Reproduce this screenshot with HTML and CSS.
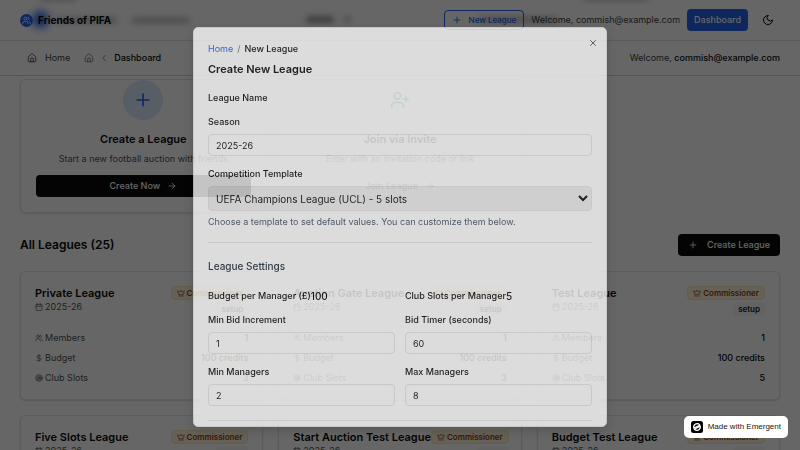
FILE: index.html
```html
<!DOCTYPE html>
<html lang="en">
<head>
<meta charset="utf-8">
<meta name="viewport" content="width=device-width, initial-scale=1">
<title>Friends of PIFA</title>
<link rel="stylesheet" href="styles.css">
</head>
<body>
<svg class="sprite" aria-hidden="true">
  <symbol id="i-users" viewBox="0 0 24 24"><path d="M16 21v-2a4 4 0 0 0-4-4H6a4 4 0 0 0-4 4v2"/><circle cx="9" cy="7" r="4"/><path d="M22 21v-2a4 4 0 0 0-3-3.9M16 3.1a4 4 0 0 1 0 7.8"/></symbol>
  <symbol id="i-home" viewBox="0 0 24 24"><path d="M15 21v-8a1 1 0 0 0-1-1h-4a1 1 0 0 0-1 1v8"/><path d="M3 10a2 2 0 0 1 .7-1.500l7-6a2 2 0 0 1 2.600 0l7 6A2 2 0 0 1 21 10v9a2 2 0 0 1-2 2H5a2 2 0 0 1-2-2z"/></symbol>
  <symbol id="i-left" viewBox="0 0 24 24"><path d="m15 18-6-6 6-6"/></symbol>
  <symbol id="i-plus" viewBox="0 0 24 24"><path d="M5 12h14M12 5v14"/></symbol>
  <symbol id="i-x" viewBox="0 0 24 24"><path d="M18 6 6 18M6 6l12 12"/></symbol>
  <symbol id="i-arrow" viewBox="0 0 24 24"><path d="M5 12h14M12 5l7 7-7 7"/></symbol>
  <symbol id="i-moon" viewBox="0 0 24 24"><path d="M12 3a6 6 0 0 0 9 9 9 9 0 1 1-9-9Z"/></symbol>
  <symbol id="i-userplus" viewBox="0 0 24 24"><path d="M16 21v-2a4 4 0 0 0-4-4H6a4 4 0 0 0-4 4v2"/><circle cx="9" cy="7" r="4"/><path d="M19 8v6M22 11h-6"/></symbol>
  <symbol id="i-calendar" viewBox="0 0 24 24"><path d="M8 2v4M16 2v4M3 10h18"/><rect x="3" y="4" width="18" height="18" rx="2"/></symbol>
  <symbol id="i-dollar" viewBox="0 0 24 24"><path d="M12 2v20M17 5H9.500a3.500 3.500 0 0 0 0 7h5a3.500 3.500 0 0 1 0 7H6"/></symbol>
  <symbol id="i-target" viewBox="0 0 24 24"><circle cx="12" cy="12" r="10"/><circle cx="12" cy="12" r="6"/><circle cx="12" cy="12" r="2"/></symbol>
  <symbol id="i-crown" viewBox="0 0 24 24"><path d="M11.600 3.300a.5.5 0 0 1 .9 0L15.400 8.900a1 1 0 0 0 1.500.3L21.200 5.500a.5.5 0 0 1 .8.500l-2.800 10.200a1 1 0 0 1-1 .7H5.800a1 1 0 0 1-1-.7L2 6a.5.5 0 0 1 .8-.5l4.300 3.700a1 1 0 0 0 1.500-.3zM5 21h14"/></symbol>
</svg>

<div class="page">
  <header class="topbar">
    <div class="ghosts" aria-hidden="true">
      <i class="ghost-logo"></i><i class="ghost-bar ghost-name"></i><i class="ghost-bar ghost-back"></i><i class="ghost-bar ghost-product"></i><i class="ghost-bar ghost-chevron"></i><i class="ghost-bar ghost-new"></i><i class="ghost-bar ghost-left"></i><i class="ghost-bar ghost-top"></i>
    </div>
    <a class="brand" href="#"><span class="logo"><svg class="icon"><use href="#i-users"/></svg></span>Friends of PIFA</a>
    <div class="actions">
      <button class="btn outline"><svg class="icon"><use href="#i-plus"/></svg>New League</button>
      <span class="welcome">Welcome, commish@example.com</span>
      <button class="btn primary">Dashboard</button>
      <button class="theme" aria-label="Toggle theme"><svg class="icon"><use href="#i-moon"/></svg></button>
    </div>
  </header>
  <nav class="subnav" aria-label="Breadcrumb">
    <div class="crumbs">
      <a href="#"><svg class="icon"><use href="#i-home"/></svg>Home</a>
      <span class="trail"><svg class="icon"><use href="#i-home"/></svg><svg class="icon"><use href="#i-left"/></svg></span>
      <strong>Dashboard</strong>
    </div>
    <div>Welcome, <strong>commish@example.com</strong></div>
  </nav>
  <main>
    <section class="starts">
      <article class="card start">
        <span class="circle blue"><svg class="icon"><use href="#i-plus"/></svg></span>
        <h2>Create a League</h2>
        <p>Start a new football auction with friends</p>
        <button class="btn dark">Create Now<svg class="icon"><use href="#i-arrow"/></svg></button>
      </article>
      <article class="card start">
        <span class="circle green"><svg class="icon"><use href="#i-userplus"/></svg></span>
        <h2>Join via Invite</h2>
        <p>Enter with an invitation code or link</p>
        <button class="btn light">Join League<svg class="icon"><use href="#i-arrow"/></svg></button>
      </article>
    </section>
    <div class="list-head">
      <h2>All Leagues (25)</h2>
      <button class="btn dark"><svg class="icon"><use href="#i-plus"/></svg>Create League</button>
    </div>
    <section class="leagues">
      <article class="card league">
        <div class="league-head">
          <div><h3>Private League</h3><p><svg class="icon"><use href="#i-calendar"/></svg>2025-26</p></div>
          <div class="tags"><span class="tag gold"><svg class="icon"><use href="#i-crown"/></svg>Commissioner</span><span class="tag">setup</span></div>
        </div>
        <dl>
          <div><dt><svg class="icon"><use href="#i-users"/></svg>Members</dt><dd>1</dd></div>
          <div><dt><svg class="icon"><use href="#i-dollar"/></svg>Budget</dt><dd>100 credits</dd></div>
          <div><dt><svg class="icon"><use href="#i-target"/></svg>Club Slots</dt><dd>3</dd></div>
        </dl>
      </article>
      <article class="card league">
        <div class="league-head">
          <div><h3>Auction Gate League</h3><p><svg class="icon"><use href="#i-calendar"/></svg>2025-26</p></div>
          <div class="tags"><span class="tag gold"><svg class="icon"><use href="#i-crown"/></svg>Commissioner</span><span class="tag">setup</span></div>
        </div>
        <dl>
          <div><dt><svg class="icon"><use href="#i-users"/></svg>Members</dt><dd>1</dd></div>
          <div><dt><svg class="icon"><use href="#i-dollar"/></svg>Budget</dt><dd>100 credits</dd></div>
          <div><dt><svg class="icon"><use href="#i-target"/></svg>Club Slots</dt><dd>3</dd></div>
        </dl>
      </article>
      <article class="card league">
        <div class="league-head">
          <div><h3>Test League</h3><p><svg class="icon"><use href="#i-calendar"/></svg>2025-26</p></div>
          <div class="tags"><span class="tag gold"><svg class="icon"><use href="#i-crown"/></svg>Commissioner</span><span class="tag">setup</span></div>
        </div>
        <dl>
          <div><dt><svg class="icon"><use href="#i-users"/></svg>Members</dt><dd>1</dd></div>
          <div><dt><svg class="icon"><use href="#i-dollar"/></svg>Budget</dt><dd>100 credits</dd></div>
          <div><dt><svg class="icon"><use href="#i-target"/></svg>Club Slots</dt><dd>5</dd></div>
        </dl>
      </article>
      <article class="card league">
        <div class="league-head">
          <div><h3>Five Slots League</h3><p><svg class="icon"><use href="#i-calendar"/></svg>2025-26</p></div>
          <div class="tags"><span class="tag gold"><svg class="icon"><use href="#i-crown"/></svg>Commissioner</span><span class="tag">setup</span></div>
        </div>
      </article>
      <article class="card league">
        <div class="league-head">
          <div><h3>Start Auction Test League</h3><p><svg class="icon"><use href="#i-calendar"/></svg>2025-26</p></div>
          <div class="tags"><span class="tag gold"><svg class="icon"><use href="#i-crown"/></svg>Commissioner</span><span class="tag">setup</span></div>
        </div>
      </article>
      <article class="card league">
        <div class="league-head">
          <div><h3>Budget Test League</h3><p><svg class="icon"><use href="#i-calendar"/></svg>2025-26</p></div>
          <div class="tags"><span class="tag gold"><svg class="icon"><use href="#i-crown"/></svg>Commissioner</span><span class="tag">setup</span></div>
        </div>
      </article>
    </section>
  </main>
</div>

<div class="overlay">
  <div class="dialog" role="dialog" aria-modal="true" aria-labelledby="dialog-title">
    <button class="close" aria-label="Close"><svg class="icon"><use href="#i-x"/></svg></button>
    <nav class="path" aria-label="Location"><a href="#">Home</a><span>/</span><b>New League</b></nav>
    <h2 id="dialog-title">Create New League</h2>
    <form>
      <div class="name">League Name</div>
      <div class="field"><label for="season">Season</label><input id="season" type="text" value="2025-26"></div>
      <div class="field">
        <label for="template">Competition Template</label>
        <select id="template"><option>UEFA Champions League (UCL) - 5 slots</option></select>
        <p>Choose a template to set default values. You can customize them below.</p>
      </div>
      <h3>League Settings</h3>
      <div class="grid">
        <div class="value">Budget per Manager (£)<span>100</span></div>
        <div class="value">Club Slots per Manager<span>5</span></div>
        <div class="field"><label for="bid">Min Bid Increment</label><input id="bid" type="text" value="1"></div>
        <div class="field"><label for="timer">Bid Timer (seconds)</label><input id="timer" type="text" value="60"></div>
        <div class="field"><label for="min">Min Managers</label><input id="min" type="text" value="2"></div>
        <div class="field"><label for="max">Max Managers</label><input id="max" type="text" value="8"></div>
      </div>
      <hr>
    </form>
  </div>
</div>

<a class="made" href="#"><svg viewBox="0 0 24 24" aria-hidden="true"><rect width="24" height="24" rx="5"/><g fill="none" stroke="#fff" stroke-width="2.500" stroke-linecap="round"><path d="M6 15a7 7 0 0 1 11-8M18 9a7 7 0 0 1-11 8M8 13l8-4M8 16l9-5"/></g></svg>Made with Emergent</a>
</body>
</html>
```
FILE: styles.css
```css
* { box-sizing: border-box; }
html, body { height: 100%; }
body { margin: 0; overflow: hidden; background: #fff; color: #0a0a0a; font: 9px/14px Inter, "Liberation Sans", sans-serif; }
h2, h3, p, dl, dd { margin: 0; }
a { color: inherit; text-decoration: none; }
button, input, select { font: inherit; color: inherit; }
strong, b { font-weight: 500; }
.sprite { position: absolute; width: 0; height: 0; }
.icon { width: 10px; height: 10px; flex: none; fill: none; stroke: currentColor; stroke-width: 2; stroke-linecap: round; stroke-linejoin: round; }
.page { height: 100%; overflow: hidden; }

.topbar { position: relative; display: flex; align-items: center; justify-content: space-between; height: 41px; padding: 0 20px; border-bottom: 1px solid #e0e0e0; }
.brand { position: relative; display: flex; align-items: center; gap: 5px; font-size: 10px; font-weight: 700; }
.logo { display: grid; place-items: center; width: 13px; height: 13px; border-radius: 50%; background: #2563eb; color: #fff; }
.logo .icon { width: 9px; height: 9px; }
.actions { position: relative; display: flex; align-items: center; gap: 7px; color: #404040; }
.ghosts { position: absolute; inset: 0; overflow: hidden; }
.ghosts i { position: absolute; filter: blur(3px); }
.ghosts .ghost-logo { left: 32px; top: 11px; width: 17px; height: 17px; border-radius: 50%; background: #2563eb; filter: blur(4px); }
.ghost-bar { height: 5px; border-radius: 3px; background: #b0b0b0; }
.ghost-name { left: 55px; top: 18px; width: 62px; }
.ghost-back { left: 132px; top: 18px; width: 58px; }
.ghost-product { left: 306px; top: 17px; width: 28px; background: #737373; }
.ghost-chevron { left: 343px; top: 17px; width: 8px; }
.ghost-new { left: 478px; top: 17px; width: 80px; }
.ghost-left { left: 40px; top: -5px; width: 36px; }
.ghost-top { left: 583px; top: -5px; width: 66px; }

.btn { display: inline-flex; align-items: center; justify-content: center; gap: 7px; height: 22px; padding: 0 7px; border: 0; border-radius: 4px; font-weight: 500; white-space: nowrap; }
.outline { height: 20px; border: 1px solid #2563eb; background: transparent; color: #2563eb; font-size: 8px; }
.primary { background: #2563eb; color: #fff; }
.dark { background: #0a0a0a; color: #fff; }
.light { border: 1px solid #e5e5e5; background: #fff; }
.theme { display: grid; place-items: center; width: 25px; height: 22px; padding: 0; border: 0; background: transparent; color: #0a0a0a; }

.subnav { display: flex; align-items: center; justify-content: space-between; height: 35px; padding: 0 20px; border-bottom: 1px solid #d4d4d4; color: #404040; }
.subnav strong { color: #0a0a0a; }
.crumbs { display: flex; align-items: center; gap: 5px; padding-left: 7px; }
.crumbs a { display: flex; align-items: center; gap: 8px; margin-right: 9px; }
.trail { display: flex; align-items: center; gap: 5px; color: #737373; }

main { padding: 3px 20px 0; }
.card { border: 1px solid #e5e5e5; border-radius: 5px; background: #fff; box-shadow: 0 1px 2px #0002; }
.starts { display: grid; grid-template-columns: repeat(3, minmax(0, 1fr)); gap: 10px; }
.start { display: flex; flex-direction: column; align-items: center; padding: 0 15px 15px; color: #525252; }
.circle { display: grid; place-items: center; width: 40px; height: 40px; border-radius: 50%; }
.circle .icon { width: 20px; height: 20px; }
.blue { background: #dbeafe; color: #2563eb; }
.green { background: #f0fdf4; color: #16a34a; }
.start h2 { margin: 9px 0 3px; font-size: 11px; line-height: 20px; font-weight: 600; color: #0a0a0a; }
.start .btn { width: 100%; margin-top: 9px; }
.list-head { display: flex; align-items: center; justify-content: space-between; margin: 21px 0 15px; }
.list-head h2 { font-size: 12px; line-height: 20px; font-weight: 600; }
.list-head .btn { gap: 9px; padding: 0 10px; }

.leagues { display: grid; grid-template-columns: repeat(3, minmax(0, 1fr)); gap: 15px; }
.league { padding: 14px; color: #525252; }
.league-head { display: flex; justify-content: space-between; height: 32px; white-space: nowrap; }
.league h3 { font-size: 11px; line-height: 14px; font-weight: 600; color: #0a0a0a; }
.league p, .league dt { display: flex; align-items: center; gap: 2px; }
.league p .icon, .league dt .icon { width: 8px; height: 8px; }
.tags { display: flex; flex-direction: column; align-items: flex-end; gap: 2px; }
.tag { display: flex; align-items: center; gap: 2px; height: 14px; padding: 0 5px; border-radius: 4px; background: #f5f5f5; color: #171717; font-size: 8px; font-weight: 600; }
.tag .icon { width: 8px; height: 8px; }
.gold { border: 1px solid #f8ebbd; background: #fcf3d6; color: #92400e; }
.league dl { display: grid; gap: 6px; margin-top: 13px; }
.league dl div { display: flex; justify-content: space-between; }
.league dd { color: #0a0a0a; font-weight: 500; }

.overlay { position: fixed; inset: 0; display: flex; align-items: flex-start; justify-content: center; padding: 27px 20px 23px; background: rgb(0 0 0 / 60%); }
.dialog { position: relative; width: 100%; max-width: 414px; padding: 14px 14px 5px; border: 1px solid #e5e5e5; border-radius: 5px; background: #fff; opacity: .77; box-shadow: 0 4px 12px #0003; }
.close { position: absolute; top: 9px; right: 8px; display: grid; place-items: center; padding: 0; border: 0; background: transparent; color: #404040; }
.close .icon { width: 10px; height: 12px; }
.theme .icon { width: 12px; height: 12px; }
.path { display: flex; gap: 4px; }
.path a { color: #2563eb; }
.path span { color: #737373; }
.dialog h2 { margin-top: 4px; font-size: 11px; line-height: 18px; font-weight: 600; }
.name { margin-top: 13px; font-weight: 500; }
.field { margin-top: 10px; }
.field label { display: block; margin-bottom: 5px; font-weight: 500; }
.field input, .field select { display: block; width: 100%; height: 22px; padding: 0 7px; border: 1px solid #e5e5e5; border-radius: 4px; background: transparent; }
.field + .field { margin-top: 11px; }
.field select { height: 25px; padding: 0 3px; background: #efefef; font-size: 10px; }
.field p { margin-top: 4px; color: #475569; }
.dialog h3 { margin: 13px 0 16px; padding-top: 16px; border-top: 1px solid #e5e5e5; font-size: 10px; line-height: 14px; font-weight: 500; color: #1e293b; }
.grid { display: grid; grid-template-columns: 1fr 1fr; column-gap: 10px; }
.value { display: flex; align-items: center; height: 13px; font-weight: 500; }
.grid .field, .grid .field + .field { margin-top: 11px; }
.value span { font-size: 10px; }
hr { margin: 14px 0 0; border: 0; border-top: 1px solid #e5e5e5; }

.made { position: fixed; right: 12px; bottom: 12px; display: flex; align-items: center; gap: 5px; height: 22px; padding: 0 7px; border-radius: 5px; background: #fff; color: #171717; font-family: "Liberation Sans", sans-serif; font-size: 8px; line-height: 12px; }
.made svg { width: 12px; height: 12px; }
```
